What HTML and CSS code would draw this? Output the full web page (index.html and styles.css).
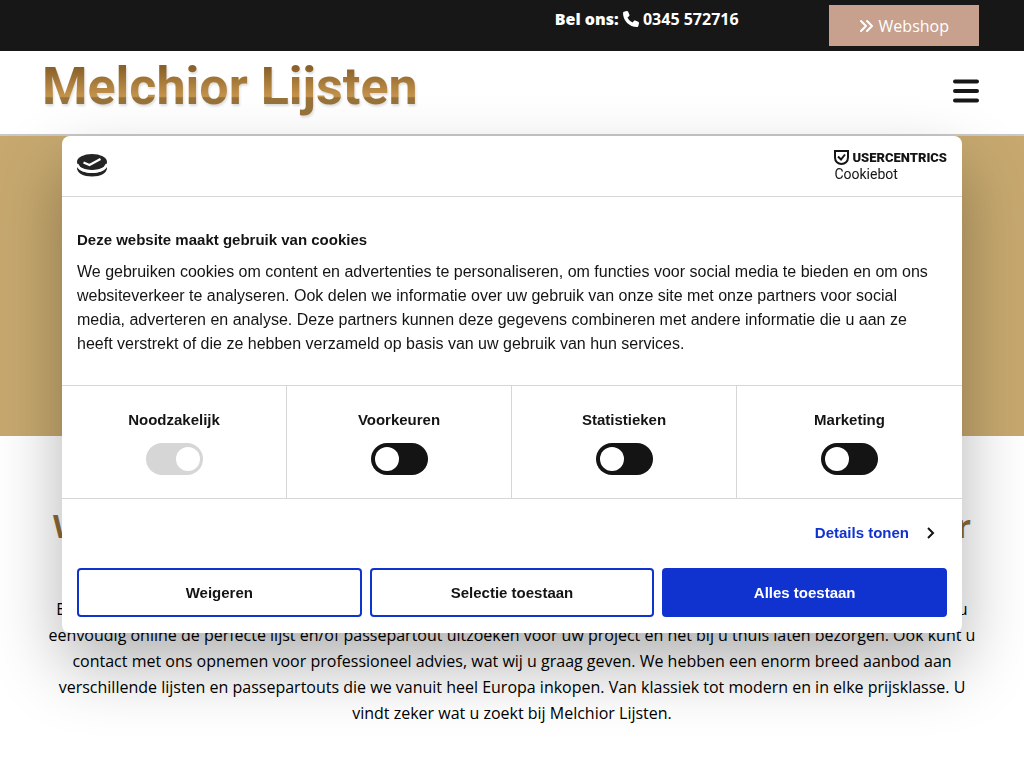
FILE: index.html
```html
<!DOCTYPE html>
<html lang="nl">
<head>
<meta charset="utf-8">
<meta name="viewport" content="width=device-width, initial-scale=1">
<title>Melchior Lijsten</title>
<link rel="stylesheet" href="styles.css">
</head>
<body>
<div class="topbar">
  <p class="phone"><strong>Bel ons:</strong> <a href="tel:0345572716"><svg class="phone-icon" viewBox="0 0 512 512" aria-hidden="true"><path d="M165 25c-8-19-29-29-49-24L28 25C12 30 0 46 0 64c0 247 201 448 448 448 18 0 34-12 39-28l24-88c5-20-5-41-24-49l-96-40c-16-7-35-2-46 12l-41 49c-70-33-127-90-160-160l49-41c14-11 19-30 12-46z"/></svg> 0345 572716</a></p>
  <a class="webshop" href="#webshop"><svg class="chevrons" viewBox="0 0 15 14" aria-hidden="true"><path d="M2 2l5 5-5 5M8 2l5 5-5 5"/></svg>Webshop</a>
</div>
<header class="site-header">
  <a class="logo" href="#home">Melchior Lijsten</a>
  <button class="menu" type="button" aria-label="Menu"><svg viewBox="0 0 26 24" aria-hidden="true"><path d="M2 2.500h22M2 12h22M2 21.500h22"/></svg></button>
</header>
<div class="banner"></div>
<main class="content">
  <h1>Webshop voor alle lijsten en passepartouts door Melchior</h1>
  <p>Bij Melchior Lijsten vindt u een groot assortiment aan lijsten en passepartouts voor elk werk. In de nieuwe webshop kunt u eenvoudig online de perfecte lijst en/of passepartout uitzoeken voor uw project en het bij u thuis laten bezorgen. Ook kunt u contact met ons opnemen voor professioneel advies, wat wij u graag geven. We hebben een enorm breed aanbod aan verschillende lijsten en passepartouts die we vanuit heel Europa inkopen. Van klassiek tot modern en in elke prijsklasse. U vindt zeker wat u zoekt bij Melchior Lijsten.</p>
</main>
<div class="overlay">
  <section class="dialog" role="dialog" aria-labelledby="cookie-title">
    <div class="dialog-head">
      <svg class="cookie-icon" viewBox="0 0 30 23" aria-hidden="true"><ellipse cx="15" cy="8" rx="15" ry="8" fill="#242424"/><path d="M0 12.500C2 16.500 8 19 15 19S28 16.500 30 12.500V14c0 5-6.500 8.500-15 8.500S0 19 0 14z" fill="#242424"/><path d="M0 10.200C2 15 8 17.500 15 17.500S28 15 30 10.200" fill="none" stroke="#fff" stroke-width="2.600"/><path d="M6.500 8.500l6 2.500L23.500 5" fill="none" stroke="#fff" stroke-width="2.200"/></svg>
      <a class="brand" href="#cookiebot">
        <span class="brand-top"><svg class="shield" viewBox="0 0 15 16" aria-hidden="true"><path d="M1 1h13v6.500c0 4-3 6.500-6.500 6.500S1 11.500 1 7.500z" fill="none" stroke="#141414" stroke-width="2"/><path d="M4 6.500l3 3 4-5" fill="none" stroke="#141414" stroke-width="2"/></svg>USERCENTRICS</span>
        <span class="brand-sub">Cookiebot</span>
      </a>
    </div>
    <div class="dialog-body">
      <h2 id="cookie-title">Deze website maakt gebruik van cookies</h2>
      <p>We gebruiken cookies om content en advertenties te personaliseren, om functies voor social media te bieden en om ons websiteverkeer te analyseren. Ook delen we informatie over uw gebruik van onze site met onze partners voor social media, adverteren en analyse. Deze partners kunnen deze gegevens combineren met andere informatie die u aan ze heeft verstrekt of die ze hebben verzameld op basis van uw gebruik van hun services.</p>
    </div>
    <div class="options">
      <label class="option">Noodzakelijk<input class="switch" type="checkbox" checked disabled></label>
      <label class="option">Voorkeuren<input class="switch" type="checkbox"></label>
      <label class="option">Statistieken<input class="switch" type="checkbox"></label>
      <label class="option">Marketing<input class="switch" type="checkbox"></label>
    </div>
    <div class="dialog-foot">
      <a class="details" href="#details">Details tonen<svg viewBox="0 0 8 12" aria-hidden="true"><path d="M1 1l5 5-5 5"/></svg></a>
      <div class="actions">
        <button class="btn" type="button">Weigeren</button>
        <button class="btn" type="button">Selectie toestaan</button>
        <button class="btn btn-primary" type="button">Alles toestaan</button>
      </div>
    </div>
  </section>
</div>
</body>
</html>
```
FILE: styles.css
```css
* { box-sizing: border-box; }
body { margin: 0; font-family: "Open Sans", sans-serif; font-size: 16px; color: #000; background: #fff; overflow: hidden; }
a { color: inherit; text-decoration: none; }
h1, h2, p { margin: 0; }

.topbar { display: flex; justify-content: flex-end; gap: 90px; padding: 5px 45px; background: #171717; color: #fff; }
.phone { padding-top: 3px; line-height: 22px; font-weight: 700; }
.phone strong { font-weight: 800; }
.phone-icon { width: 16px; height: 16px; fill: #fff; vertical-align: -2px; }
.webshop { display: flex; align-items: center; gap: 5px; height: 41px; padding: 0 30px; background: #c7a08e; font-weight: 400; }
.chevrons { width: 15px; height: 14px; fill: none; stroke: #fff; stroke-width: 2; stroke-linecap: round; stroke-linejoin: round; }

.site-header { display: flex; justify-content: space-between; align-items: center; height: 85px; padding: 0 45px 4px 42px; border-bottom: 2px solid #c8c8c8; }
.logo { font-family: Roboto, sans-serif; font-size: 52px; line-height: 60px; font-weight: 700; padding-bottom: 8px; color: transparent; background: linear-gradient(#8a6128 16%, #c2924b 56%, #c2924b 58%, #97733b 60%, #97733b); -webkit-background-clip: text; background-clip: text; filter: drop-shadow(1px 2px 1px #0002); }
.menu { padding: 0; border: 0; background: none; }
.menu svg { display: block; width: 26px; height: 24px; stroke: #171717; stroke-width: 4; stroke-linecap: round; }

.banner { height: 300px; background: #c7a96f; }
.content { padding: 68px 45px; text-align: center; }
.content h1 { font-size: 32px; line-height: 44px; color: #8c6b37; margin-bottom: 48px; }
.content p { line-height: 26px; }

.overlay { position: fixed; inset: 0; display: flex; align-items: center; justify-content: center; }
.dialog { width: 900px; max-width: 100%; background: #fff; border-radius: 8px; box-shadow: 0 32px 68px rgba(0, 0, 0, .3); font-family: "Liberation Sans", Arial, sans-serif; color: #141414; font-size: 15px; line-height: 24px; }
.dialog-head { display: flex; justify-content: space-between; align-items: center; height: 61px; padding: 0 15px; border-bottom: 1px solid #d6d6d6; }
.cookie-icon { width: 30px; height: 23px; }
.brand { font-family: Roboto, sans-serif; line-height: 16px; }
.brand-top { display: flex; gap: 3px; font-weight: 900; font-size: 13px; }
.shield { width: 15px; height: 16px; }
.brand-sub { display: block; font-size: 14px; }
.dialog-body { padding: 31px 15px 29px; }
.dialog-body h2 { font-size: 15px; line-height: 24px; margin-bottom: 8px; }
.dialog-body p { font-size: 16px; padding-right: 10px; }
.options { display: grid; grid-template-columns: repeat(4, 1fr); border: solid #d6d6d6; border-width: 1px 0; }
.option { display: flex; flex-direction: column; align-items: center; gap: 11px; padding: 22px 0 23px; font-weight: 700; font-size: 15px; border-right: 1px solid #d6d6d6; }
.option:last-child { border-right: 0; }
.switch { appearance: none; display: flex; align-items: center; width: 57px; height: 32px; margin: 0; padding: 0 4px; border-radius: 16px; background: #141414; }
.switch::before { content: ""; width: 24px; height: 24px; border-radius: 50%; background: #fff; }
.switch:checked { justify-content: flex-end; padding-right: 3px; background: #d6d6d6; }
.dialog-foot { display: flex; flex-direction: column; gap: 23px; padding: 22px 15px 16px; }
.details { display: flex; align-items: center; gap: 18px; align-self: flex-end; padding-right: 12px; color: #1032cf; font-weight: 700; font-size: 15px; }
.details svg { width: 8px; height: 12px; fill: none; stroke: #141414; stroke-width: 2; }
.actions { display: grid; grid-template-columns: repeat(3, 1fr); gap: 8px; }
.btn { height: 49px; border: 2px solid #1032cf; border-radius: 4px; background: #fff; color: #141414; font-family: inherit; font-size: 15px; font-weight: 700; }
.btn-primary { background: #1032cf; color: #fff; }
```
